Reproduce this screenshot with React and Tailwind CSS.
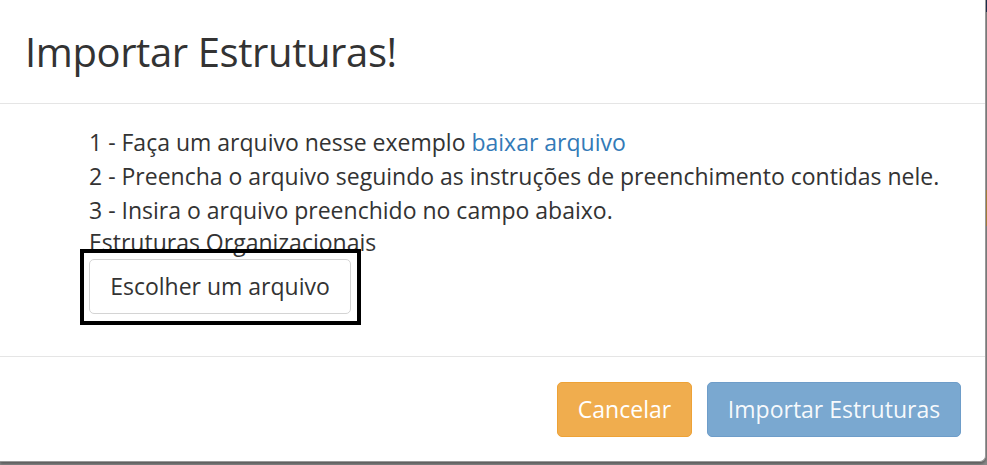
const Modal = () => {
  return (
    <div className="flex h-[462px] w-[986px] flex-col rounded-br-[6px] border-r border-b border-[#999] bg-white shadow-[0_2px_3px_rgba(0,0,0,0.35)]">
      <div className="flex h-[104px] items-center border-b border-[#e5e5e5] pl-[25px]">
        <h4 className="text-[40px] leading-none font-normal text-[#333] -tracking-[0.4px]">Importar Estruturas!</h4>
      </div>

      <div className="border-b border-[#e5e5e5] pt-[21px] pb-[42px] pl-[89px] text-[23px] text-[#333]">
        <p className="h-[34px] leading-[34px]">
          1 - Faça um arquivo nesse exemplo <a href="#" className="text-[#337ab7]">baixar arquivo</a>
        </p>
        <p className="h-[34px] leading-[34px]">2 - Preencha o arquivo seguindo as instruções de preenchimento contidas nele.</p>
        <p className="h-[34px] leading-[34px]">3 - Insira o arquivo preenchido no campo abaixo.</p>
        <label className="block h-[30px] leading-[30px]">Estruturas Organizacionais</label>
        <div className="relative mt-[2px] w-[262px]">
          <button className="h-[55px] w-[262px] rounded-[5px] border border-[#d4d4d4] bg-white text-[23px] text-[#333]">
            Escolher um arquivo
          </button>
          <span className="pointer-events-none absolute -top-[10px] -right-[10px] -bottom-[11px] -left-[9px] border-4 border-black" />
        </div>
      </div>

      <div className="flex flex-1 items-start justify-end gap-[15px] pt-[25px] pr-[24px]">
        <button className="h-[55px] w-[135px] rounded-[5px] border border-[#eea236] bg-[#f0ad4e] text-[23px] text-white">
          Cancelar
        </button>
        <button className="h-[55px] w-[254px] rounded-[5px] border border-[#6e9dc9] bg-[#7aa8d0] text-[23px] text-white/95">
          Importar Estruturas
        </button>
      </div>
    </div>
  );
};

export default function App() {
  return (
    <div className="flex h-[465px] w-[987px] overflow-hidden bg-[#8a8a8a] font-['Open_Sans',sans-serif]">
      <Modal />
      <div className="flex w-[1px] flex-col">
        <div className="h-[12px] bg-[#1c2b4a]" />
        <div className="h-[178px]" />
        <div className="h-[36px] bg-[#a07a3a]" />
      </div>
    </div>
  );
}
